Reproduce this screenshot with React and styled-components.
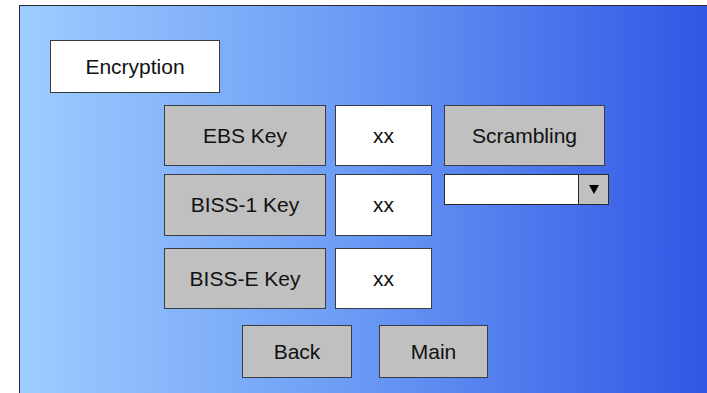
import React from 'react';
import styled, { createGlobalStyle } from 'styled-components';

const GlobalStyle = createGlobalStyle`
  html, body {
    margin: 0;
    padding: 0;
    overflow: hidden;
    background: #ffffff;
  }
  * {
    box-sizing: border-box;
  }
`;

const Screen = styled.div`
  width: 707px;
  height: 393px;
  padding: 5px 0 0 19px;
  font-family: "Liberation Sans", Arial, sans-serif;
`;

const Panel = styled.div`
  width: 720px;
  height: 400px;
  border-top: 1px solid #2a2a30;
  border-left: 1px solid #2a2a30;
  background: linear-gradient(to right, #9dcdff 0%, #6d9cf5 45%, #2b50e3 100%);
  padding: 34px 0 0 30px;
  display: flex;
  flex-direction: column;
`;

const Title = styled.div`
  width: 170px;
  height: 53px;
  background: #ffffff;
  border: 1px solid #3a3a3a;
  display: flex;
  align-items: center;
  justify-content: center;
  font-size: 21px;
  color: #111;
`;

const Rows = styled.div`
  margin: 12px 0 0 114px;
  display: flex;
  flex-direction: column;
`;

const Row = styled.div`
  display: flex;
  align-items: flex-start;
  margin-top: ${(p) => p.$top || 0}px;
`;

const Cell = styled.div`
  width: ${(p) => p.$w}px;
  height: ${(p) => p.$h}px;
  margin-left: ${(p) => p.$left || 0}px;
  background: ${(p) => (p.$white ? '#ffffff' : '#c0c0c0')};
  border: 1px solid #3c3c44;
  display: flex;
  align-items: center;
  justify-content: center;
  font-size: 21px;
  color: #111;
`;

const Select = styled.div`
  width: 165px;
  height: 31px;
  margin-left: 12px;
  background: #ffffff;
  border: 1px solid #2a2a2a;
  display: flex;
  justify-content: flex-end;
`;

const Arrow = styled.div`
  width: 30px;
  height: 100%;
  background: #c0c0c0;
  border-left: 1px solid #2a2a2a;
  display: flex;
  align-items: center;
  justify-content: center;
`;

const Footer = styled.div`
  display: flex;
  margin: 16px 0 0 192px;
  gap: 27px;
`;

const rows = [
  { label: 'EBS Key', value: 'xx', top: 0, h: 61 },
  { label: 'BISS-1 Key', value: 'xx', top: 8, h: 62 },
  { label: 'BISS-E Key', value: 'xx', top: 12, h: 61 },
];

export default function App() {
  return (
    <>
      <GlobalStyle />
      <Screen>
        <Panel>
          <Title>Encryption</Title>
          <Rows>
            {rows.map((r, i) => (
              <Row key={r.label} $top={r.top}>
                <Cell $w={162} $h={r.h}>{r.label}</Cell>
                <Cell $w={97} $h={r.h} $left={9} $white>{r.value}</Cell>
                {i === 0 && <Cell $w={161} $h={r.h} $left={12}>Scrambling</Cell>}
                {i === 1 && (
                  <Select>
                    <Arrow>
                      <svg width="10" height="9" viewBox="0 0 10 9">
                        <polygon points="0,0 10,0 5,9" fill="#000" />
                      </svg>
                    </Arrow>
                  </Select>
                )}
              </Row>
            ))}
          </Rows>
          <Footer>
            <Cell $w={110} $h={53}>Back</Cell>
            <Cell $w={109} $h={53}>Main</Cell>
          </Footer>
        </Panel>
      </Screen>
    </>
  );
}
